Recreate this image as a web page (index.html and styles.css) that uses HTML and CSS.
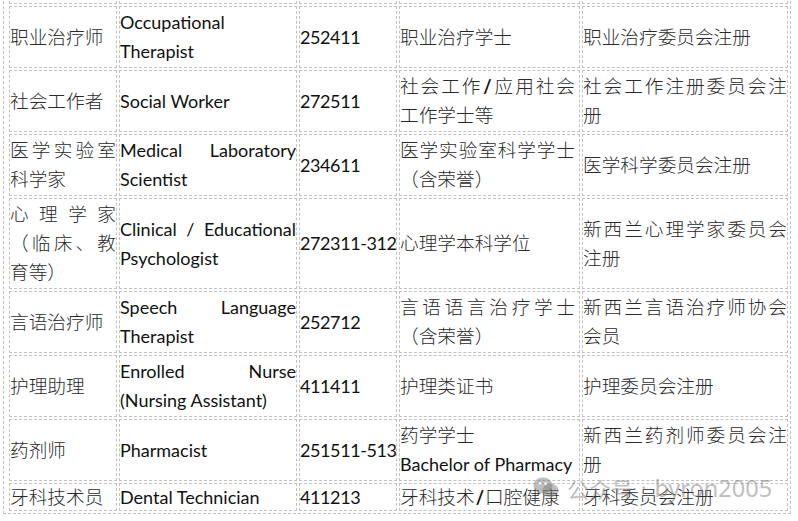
FILE: index.html
```html
<!DOCTYPE html>
<html lang="zh">
<head>
<meta charset="utf-8">
<title>新西兰职业注册表</title>
<link rel="stylesheet" href="styles.css">
</head>
<body>
<table class="sheet">
  <tr class="spacer">
    <td class="c1"></td><td class="c2"></td><td class="c3"></td><td class="c4"></td><td class="c5"></td>
  </tr>
  <tr>
    <td><span class="zh">职业治疗师</span></td>
    <td>Occupational Therapist</td>
    <td class="num">252411</td>
    <td><span class="zh">职业治疗学士</span></td>
    <td><span class="zh">职业治疗委员会注册</span></td>
  </tr>
  <tr>
    <td><span class="zh">社会工作者</span></td>
    <td>Social Worker</td>
    <td class="num">272511</td>
    <td><span class="zh">社会工作</span><span class="sl">/</span><span class="zh">应用社会工作学士等</span></td>
    <td><span class="zh">社会工作注册委员会注册</span></td>
  </tr>
  <tr>
    <td><span class="zh">医学实验室科学家</span></td>
    <td>Medical Laboratory Scientist</td>
    <td class="num">234611</td>
    <td><span class="zh">医学实验室科学学士（含荣誉）</span></td>
    <td><span class="zh">医学科学委员会注册</span></td>
  </tr>
  <tr>
    <td><span class="zh">心理学家（临床、教育等）</span></td>
    <td>Clinical / Educational Psychologist</td>
    <td class="num">272311-312</td>
    <td><span class="zh">心理学本科学位</span></td>
    <td><span class="zh">新西兰心理学家委员会注册</span></td>
  </tr>
  <tr>
    <td><span class="zh">言语治疗师</span></td>
    <td>Speech Language Therapist</td>
    <td class="num">252712</td>
    <td><span class="zh">言语语言治疗学士（含荣誉）</span></td>
    <td><span class="zh">新西兰言语治疗师协会会员</span></td>
  </tr>
  <tr>
    <td><span class="zh">护理助理</span></td>
    <td>Enrolled Nurse (Nursing Assistant)</td>
    <td class="num">411411</td>
    <td><span class="zh">护理类证书</span></td>
    <td><span class="zh">护理委员会注册</span></td>
  </tr>
  <tr>
    <td><span class="zh">药剂师</span></td>
    <td>Pharmacist</td>
    <td class="num">251511-513</td>
    <td><span class="zh">药学学士</span><br><span class="nw">Bachelor of Pharmacy</span></td>
    <td><span class="zh">新西兰药剂师委员会注册</span></td>
  </tr>
  <tr class="last">
    <td><span class="zh">牙科技术员</span></td>
    <td>Dental Technician</td>
    <td class="num">411213</td>
    <td><span class="zh">牙科技术</span><span class="sl">/</span><span class="zh">口腔健康</span></td>
    <td><span class="zh">牙科委员会注册</span></td>
  </tr>
</table>

<div class="wm">
  <svg class="wm-icon" width="26" height="22" viewBox="0 0 26 22" aria-hidden="true">
    <ellipse cx="10" cy="8.5" rx="9.5" ry="8" fill="currentColor"/>
    <ellipse cx="17.5" cy="13.5" rx="8" ry="6.8" fill="currentColor"/>
    <circle cx="7" cy="6.5" r="1.2" fill="#fff"/>
    <circle cx="12.5" cy="6.5" r="1.2" fill="#fff"/>
  </svg>
  <span class="wm-zh">公众号</span>
  <span class="wm-dot">·</span>
  <span class="wm-en">byron2005</span>
</div>
</body>
</html>
```
FILE: styles.css
```css
* { box-sizing: border-box; }

html, body {
  margin: 0;
  padding: 0;
  background: #fff;
}

body {
  width: 798px;
  height: 521px;
  overflow: hidden;
  position: relative;
  font-family: "Lato", sans-serif;
}

.sheet {
  border-collapse: separate;
  border-spacing: 2px;
  table-layout: fixed;
  width: 788px;
  margin: -19px 0 0 3px;
  padding: 0 0 0 3px;
  border: 1px dashed #c2c2c2;
}

.sheet td {
  border: 1px dashed #c2c2c2;
  padding: 1px 0;
  vertical-align: middle;
  text-align: justify;
  font-family: "Lato", sans-serif;
  font-size: 18px;
  line-height: 29px;
  color: #111;
}

.sheet .spacer td {
  height: 20px;
  padding: 0;
  line-height: 0;
}

.c1 { width: 108px; }
.c2 { width: 178px; }
.c3 { width: 98px; }
.c4 { width: 181px; }
.c5 { width: 206px; }

.sheet td:nth-child(4) { padding-right: 4px; }

.sheet td.num {
  white-space: nowrap;
  letter-spacing: -0.4px;
}

.zh {
  font-family: "Noto Sans CJK SC", sans-serif;
  font-size: 18.67px;
  line-height: 20px;
  font-weight: 300;
  color: #2a2a2a;
}

.sl {
  font-weight: 700;
  margin: 0 1px;
}

.nw { white-space: nowrap; }

.sheet .last td { line-height: 24px; }

.wm {
  position: absolute;
  left: 533px;
  top: 474px;
  display: flex;
  align-items: center;
  color: rgba(125, 125, 125, 0.5);
  pointer-events: none;
}

.wm-icon { margin-right: 8px; }

.wm-zh {
  font-family: "Noto Sans CJK SC", sans-serif;
  font-size: 22px;
  line-height: 26px;
}

.wm-dot {
  font-family: "Noto Sans", sans-serif;
  font-size: 20px;
  margin: 0 8px;
}

.wm-en {
  font-family: "Noto Sans", sans-serif;
  font-size: 23.5px;
  line-height: 26px;
}
```
